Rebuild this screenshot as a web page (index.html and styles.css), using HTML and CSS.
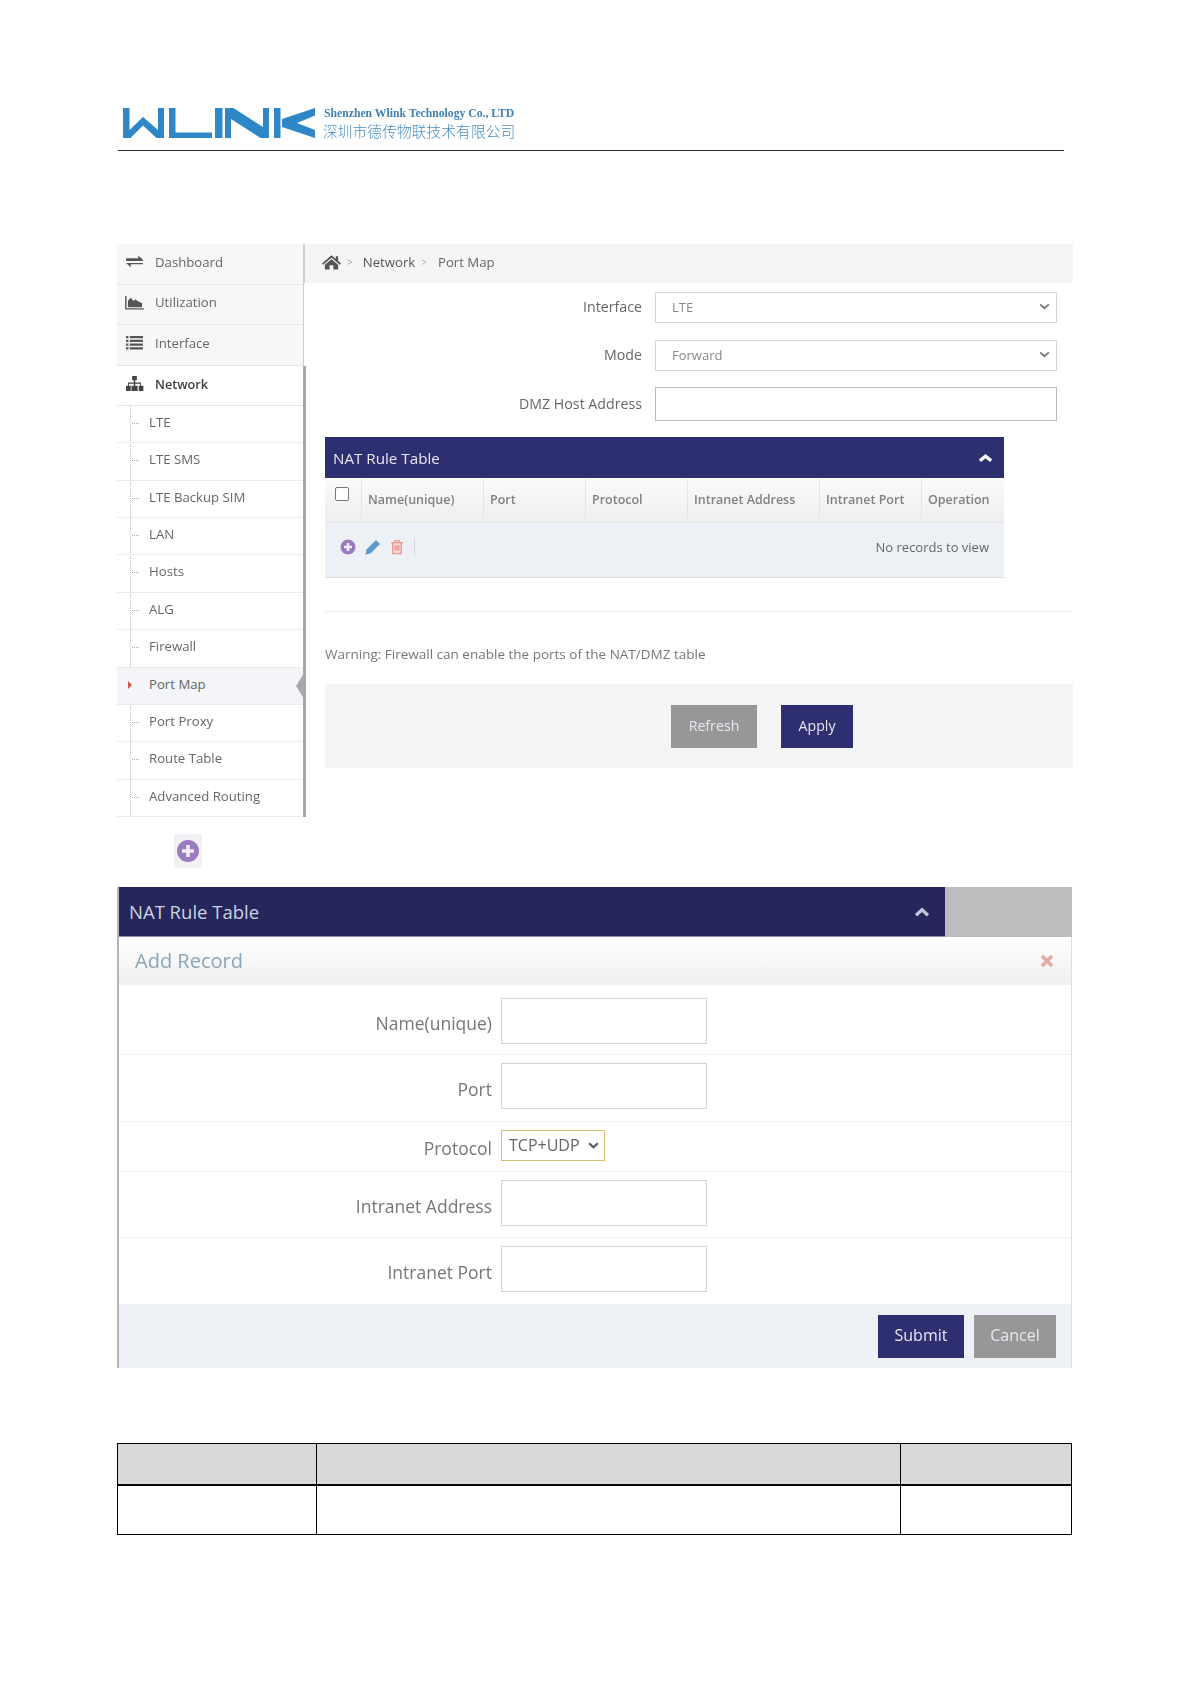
FILE: index.html
```html
<!DOCTYPE html>
<html lang="en">
<head>
<meta charset="utf-8">
<title>Port Map</title>
<link rel="stylesheet" href="styles.css">
</head>
<body>
<div class="page">
  <header class="brand">
    <svg class="logo" viewBox="0 0 192 30" width="192" height="30">
      <path d="M0 0H6.500V22L20 9L35 22V0H41V30H33.500L20 17.500L7.500 30H0Z"/>
      <path d="M46 0h6.500v24.500H89V30H46Z"/>
      <path d="M92 0h7.500v30H92Z"/>
      <path d="M102 0h8.500L140 19V0h6v30h-8.500L108 11V30h-6Z"/>
      <path d="M151 0h6.500v30H151Z"/>
      <path d="M159 11L192 0v7.500L174 15L192 22v8L159 19Z"/>
    </svg>
    <div class="brand-text">
      <div class="brand-en">Shenzhen Wlink Technology Co., LTD</div>
      <div class="brand-cn">深圳市德传物联技术有限公司</div>
    </div>
  </header>

  <section class="shot-one">
    <nav class="side">
      <div class="side-top">
        <div class="side-item"><svg class="side-icon" viewBox="0 0 20 16"><path d="M1 4.500h13V1.500l5 4.500v1.500H1zM19 9.500v1.500H6v3L1 9.500z"/></svg><span>Dashboard</span></div>
        <div class="side-item"><svg class="side-icon" viewBox="0 0 20 16"><path d="M0 1h1.500v13H20v1.500H0z"/><path d="M3 13V6l3-3 3 3.500 2-2 3 2.500 4 1.500V13z"/></svg><span>Utilization</span></div>
        <div class="side-item"><svg class="side-icon" viewBox="0 0 20 16"><path d="M1 1h2.500v2.500H1zM5 1h14v2.500H5zM1 5h2.500v2.500H1zM5 5h14v2.500H5zM1 9h2.500v2.500H1zM5 9h14v2.500H5zM1 13h2.500v2.500H1zM5 13h14v2.500H5z"/></svg><span>Interface</span></div>
      </div>
      <div class="side-open">
        <div class="side-item side-item-open"><svg class="side-icon" viewBox="0 0 20 16"><path d="M7.500 0h5v4.500h-1.700V7H17v3.500h2.500V16h-5v-5.500H16V8.200h-5.200v2.300h2.500V16H6.800v-5.500h2.500V8.200H4v2.300h2V16H1v-5.500h2V7h6.200V4.500H7.500z"/></svg><span>Network</span></div>
        <ul class="sub">
          <li>LTE</li>
          <li>LTE SMS</li>
          <li>LTE Backup SIM</li>
          <li>LAN</li>
          <li>Hosts</li>
          <li>ALG</li>
          <li>Firewall</li>
          <li class="sub-on">Port Map</li>
          <li>Port Proxy</li>
          <li>Route Table</li>
          <li>Advanced Routing</li>
        </ul>
      </div>
    </nav>

    <main class="main">
      <div class="crumbs">
        <svg class="home" viewBox="0 0 20 16" width="19" height="16"><path d="M10 1L0 9.500l1.200 1.300L10 3.500l8.800 7.300L20 9.500l-3-2.600V2h-2.500v2.800z"/><path d="M3 11l7-5.800 7 5.800v5h-5v-4.500H8V16H3z"/></svg>
        <span class="crumb-sep crumb-sep-a">&gt;</span>
        <span class="crumb-link">Network</span>
        <span class="crumb-sep crumb-sep-b">&gt;</span>
        <span class="crumb-cur">Port Map</span>
      </div>

      <div class="form">
        <div class="form-row row-if">
          <label class="form-label">Interface</label>
          <div class="fake-select">LTE<svg class="chev" viewBox="0 0 12 8" width="11" height="7"><path d="M1 1.500L6 6l5-4.500"/></svg></div>
        </div>
        <div class="form-row row-mode">
          <label class="form-label">Mode</label>
          <div class="fake-select">Forward<svg class="chev" viewBox="0 0 12 8" width="11" height="7"><path d="M1 1.500L6 6l5-4.500"/></svg></div>
        </div>
        <div class="form-row row-dmz">
          <label class="form-label">DMZ Host Address</label>
          <div class="text-box"></div>
        </div>
      </div>

      <div class="grid-wrap">
        <div class="grid-title">
          <span>NAT Rule Table</span>
          <svg class="caret" viewBox="0 0 16 10" width="15" height="10"><path d="M2 8l6-5L14 8"/></svg>
        </div>
        <div class="grid-head">
          <div class="gc gc-check"><span class="check"></span></div>
          <div class="gc gc-name">Name(unique)</div>
          <div class="gc gc-port">Port</div>
          <div class="gc gc-proto">Protocol</div>
          <div class="gc gc-addr">Intranet Address</div>
          <div class="gc gc-iport">Intranet Port</div>
          <div class="gc gc-op">Operation</div>
        </div>
        <div class="grid-pager">
          <svg class="tool" viewBox="0 0 16 16" width="16" height="16"><circle cx="8" cy="8" r="7.500" fill="#9b7bc0"/><path d="M8 4v8M4 8h8" stroke="#edf1f6" stroke-width="2.600"/></svg>
          <svg class="tool" viewBox="0 0 16 16" width="16" height="16"><path d="M0.500 15.500l1-5L11 1l4 4-9.500 9.500z" fill="#5c9bd0"/><path d="M0.500 15.500l1-3 2 2z" fill="#8a8f98"/></svg>
          <svg class="tool" viewBox="0 0 16 16" width="14" height="16"><path d="M3 3h10v12.500H3z" fill="#f3d6d0"/><path d="M1 3h14M5.500 3V1h5v2M3 3v12.500h10V3M6 6v6M8 6v6M10 6v6" fill="none" stroke="#e89a8f" stroke-width="1.500"/></svg>
          <span class="tool-sep"></span>
          <span class="no-rec">No records to view</span>
        </div>
      </div>

      <div class="rule"></div>
      <p class="warn">Warning: Firewall can enable the ports of the NAT/DMZ table</p>
      <div class="foot">
        <button class="btn btn-grey btn-refresh">Refresh</button>
        <button class="btn btn-navy btn-apply">Apply</button>
      </div>
    </main>
  </section>

  <div class="plus-tile">
    <svg viewBox="0 0 24 24" width="24" height="24"><circle cx="12" cy="12" r="11" fill="#9b7bc0"/><path d="M12 6v12M6 12h12" stroke="#f3eff7" stroke-width="3.600"/></svg>
  </div>

  <section class="shot-two">
    <div class="bar">
      <div class="bar-dark">
        <span>NAT Rule Table</span>
        <svg class="caret caret-dim" viewBox="0 0 18 12" width="18" height="11"><path d="M2.500 10L9 4l6.500 6"/></svg>
      </div>
      <div class="bar-grey"></div>
    </div>
    <div class="modal-head">
      <span>Add Record</span>
      <svg class="close" viewBox="0 0 14 14" width="14" height="14"><path d="M2 2l10 10M12 2L2 12"/></svg>
    </div>
    <div class="m-row m-row-name"><label class="m-label">Name(unique)</label><div class="m-input"></div></div>
    <div class="m-row m-row-port"><label class="m-label">Port</label><div class="m-input"></div></div>
    <div class="m-row m-row-proto"><label class="m-label m-label-low">Protocol</label><div class="m-select">TCP+UDP<svg class="chev chev-dark" viewBox="0 0 12 8" width="11" height="7"><path d="M1 1.500L6 6l5-4.500"/></svg></div></div>
    <div class="m-row m-row-addr"><label class="m-label">Intranet Address</label><div class="m-input"></div></div>
    <div class="m-row m-row-iport"><label class="m-label">Intranet Port</label><div class="m-input"></div></div>
    <div class="m-foot">
      <button class="btn btn-navy btn-submit">Submit</button>
      <button class="btn btn-grey btn-cancel">Cancel</button>
    </div>
  </section>

  <table class="blank-table">
    <tr class="blank-head"><td class="c1"></td><td class="c2"></td><td class="c3"></td></tr>
    <tr class="blank-body"><td></td><td></td><td></td></tr>
  </table>
</div>
</body>
</html>
```

FILE: styles.css
```css
* { box-sizing: border-box; }
html, body { margin: 0; padding: 0; background: #fff; }
body { font-family: "Open Sans", "Noto Sans", sans-serif; color: #666; width: 1191px; height: 1684px; overflow: hidden; }
.page { padding: 108px 118px 0 117px; filter: blur(0.35px); }

/* letterhead */
.brand { display: flex; gap: 9px; height: 43px; width: 946px; margin-left: 1px; padding-left: 5px; border-bottom: 1px solid #2a2a2a; }
.logo { fill: #2f87c8; flex: none; }
.brand-text { margin-top: -1px; }
.brand-en { font: bold 11.700px/14px "Liberation Serif", serif; color: #3d80b4; white-space: nowrap; }
.brand-cn { font: 300 14.700px/19px "Noto Sans CJK SC", sans-serif; color: #4a8dc2; white-space: nowrap; margin-left: -1px; letter-spacing: 0.1px; }

/* first screenshot */
.shot-one { display: grid; grid-template-columns: 188px 768px; margin-top: 93px; }
.side { font-size: 13.200px; color: #666; }
.side-top { border-right: 1px solid #cfcfcf; background: #f7f7f7; margin-right: 1px; }
.side-top .side-item { padding-bottom: 4px; }
.side-item { display: flex; align-items: center; height: 40.500px; padding-left: 8px; border-bottom: 1px solid #e6e6e6; }
.side-icon { width: 19px; height: 15px; fill: #555; flex: none; margin-right: 11px; }
.side-item-open { font-weight: 600; font-size: 12.700px; color: #3f3f3f; background: #fff; padding-bottom: 3px; }
.side-item-open .side-icon { fill: #444; }
.side-open { border-right: 3px solid #a8a8a8; background: #fff; margin-right: -1px; }
.sub { list-style: none; margin: 0; padding: 0; background-image: repeating-linear-gradient(#bbb 0 1px, transparent 1px 2px); background-size: 1px 100%; background-position: 13px 0; background-repeat: no-repeat; }
.sub li { position: relative; height: 37.360px; line-height: 33px; padding-left: 32px; border-bottom: 1px solid #ececec; color: #666; }
.sub li::before { content: ""; position: absolute; left: 15px; top: 17px; width: 7px; border-top: 1px dotted #aaa; }
.sub-on { background: #f3f5f9; color: #555; }
.sub li.sub-on::before { left: 11px; top: 13px; width: 0; height: 0; border-top: 4px solid transparent; border-bottom: 4px solid transparent; border-left: 4px solid #d0554a; }
.sub li.sub-on::after { content: ""; position: absolute; right: -1px; top: 5px; border-top: 13px solid transparent; border-bottom: 13px solid transparent; border-right: 8px solid #a8a8a8; }

.main { font-size: 13.200px; min-width: 0; }
.crumbs { display: flex; align-items: center; height: 39px; background: #f5f5f5; padding: 0 0 3px 17px; border-left: 1px solid #cfcfcf; margin-left: -1px; color: #666; }
.home { fill: #555; flex: none; }
.crumb-sep { font-size: 10px; color: #aaa; }
.crumb-sep-a { margin: 0 10px 0 6px; }
.crumb-sep-b { margin: 0 11px 0 6px; }
.crumb-link { color: #555; }

.form { padding-top: 9px; }
.form-row { display: grid; grid-template-columns: 337px 402px; column-gap: 13px; align-items: center; }
.form-label { text-align: right; font-size: 14.200px; color: #666; padding-bottom: 2px; }
.row-if { height: 30px; }
.row-mode { height: 30px; margin-top: 18px; }
.row-dmz { height: 34px; margin-top: 17px; }
.fake-select { display: flex; align-items: center; justify-content: space-between; height: 31px; padding: 0 6px 2px 16px; border: 1px solid #d6d6d6; color: #888; font-size: 13px; }
.chev { fill: none; stroke: #777; stroke-width: 2; flex: none; }
.text-box { height: 34px; border: 1px solid #bdbdbd; }

.grid-wrap { width: 679px; margin: 16px 0 0 20px; }
.grid-title { display: flex; align-items: center; justify-content: space-between; height: 41px; padding: 0 11px 0 8px; background: #2e2f70; color: #e6e8f4; font-size: 15.200px; }
.caret { fill: none; stroke: #fff; stroke-width: 3.600; flex: none; }
.grid-head { display: grid; grid-template-columns: 36px 122px 102px 102px 132px 102px 83px; height: 44px; margin-top: 1px; background: linear-gradient(#fafafa, #eeeeee); border-bottom: 1px solid #e2e2e2; font-weight: 600; color: #808080; font-size: 12.500px; }
.gc { padding-left: 6px; line-height: 41px; border-left: 1px solid #e4e4e4; white-space: nowrap; }
.gc-check { border-left: 0; padding: 8px 0 0 10px; line-height: 0; }
.check { display: inline-block; width: 14px; height: 14px; border: 1px solid #777; border-radius: 2px; background: #fff; }
.grid-pager { display: flex; align-items: center; height: 55px; padding: 0 15px 6px 15px; background: #edf1f6; border-bottom: 1px solid #dcdcdc; }
.tool { flex: none; margin-right: 9px; }
.tool-sep { width: 1px; height: 18px; background: #d5d8dc; margin-left: 1px; }
.no-rec { margin-left: auto; color: #666; font-size: 13px; }

.rule { margin: 33px 0 0 20px; border-top: 1px solid #ececec; }
.warn { margin: 33px 0 0 20px; height: 18px; line-height: 18px; font-size: 13.500px; color: #777; }
.foot { display: flex; gap: 24px; height: 84px; margin: 21px 0 0 20px; padding: 21px 0 0 346px; background: #f5f5f5; }
.btn { height: 43px; border: 0; padding: 0 0 2px; font-family: inherit; color: #e8e8f2; font-size: 14.200px; }
.btn-grey { background: #979797; }
.btn-navy { background: #2e2f70; }
.btn-refresh { width: 86px; }
.btn-apply { width: 72px; }

.plus-tile { display: flex; align-items: center; justify-content: center; width: 28px; height: 34px; margin: 17px 0 0 57px; background: #f3f1f6; }

/* second screenshot */
.shot-two { margin-top: 19px; width: 955px; border-left: 2px solid #b5b5b5; border-right: 1px solid #dedede; }
.bar { display: flex; height: 50px; }
.bar-dark { display: flex; align-items: center; justify-content: space-between; width: 826px; padding: 0 14px 0 10px; background: #25265c; color: #cfd2e0; font-size: 18.500px; border-bottom: 1px solid #8a8cb0; }
.caret-dim { stroke: #c3c6dc; }
.bar-grey { flex: 1; background: #bdbdbd; margin-right: -1px; }
.modal-head { display: flex; align-items: center; justify-content: space-between; height: 48px; padding: 0 17px 0 16px; background: linear-gradient(#fff, #efefef); color: #8aa5b8; font-size: 20px; }
.close { fill: none; stroke: #e5a9a5; stroke-width: 3.500; flex: none; }
.m-row { display: grid; grid-template-columns: 373px 206px; column-gap: 9px; border-bottom: 1px solid #f3f3f3; padding-top: 13px; font-size: 17.500px; color: #777; }
.m-row-name { height: 70px; }
.m-row-port { height: 67px; padding-top: 8px; }
.m-row-proto { height: 50px; padding-top: 8px; }
.m-row-addr { height: 66px; padding-top: 8px; }
.m-row-iport { height: 66px; padding-top: 8px; border-bottom: 0; }
.m-label { text-align: right; line-height: 50px; }
.m-row-port .m-label, .m-row-addr .m-label, .m-row-iport .m-label { line-height: 52px; }
.m-label-low { line-height: 36px; }
.m-input { height: 46px; border: 1px solid #d4d4d4; }
.m-select { display: flex; align-items: center; justify-content: space-between; width: 104px; height: 31px; padding: 0 5px 0 7px; border: 1px solid #d9bf72; color: #666; font-size: 16px; }
.chev-dark { stroke: #555; stroke-width: 2.400; }
.m-foot { display: flex; justify-content: flex-end; gap: 10px; height: 64px; padding: 11px 15px 0 0; background: #eef1f6; }
.btn-submit { width: 86px; font-size: 16px; }
.btn-cancel { width: 82px; font-size: 16px; }

/* empty table */
.blank-table { border-collapse: collapse; width: 955px; margin-top: 75px; table-layout: fixed; }
.blank-table td { border: 1.500px solid #000; padding: 0; }
.blank-head { height: 42px; background: #d9d9d9; }
.blank-head td { border-bottom-width: 2px; }
.blank-body { height: 49px; }
.c1 { width: 199px; }
.c3 { width: 171px; }
```
